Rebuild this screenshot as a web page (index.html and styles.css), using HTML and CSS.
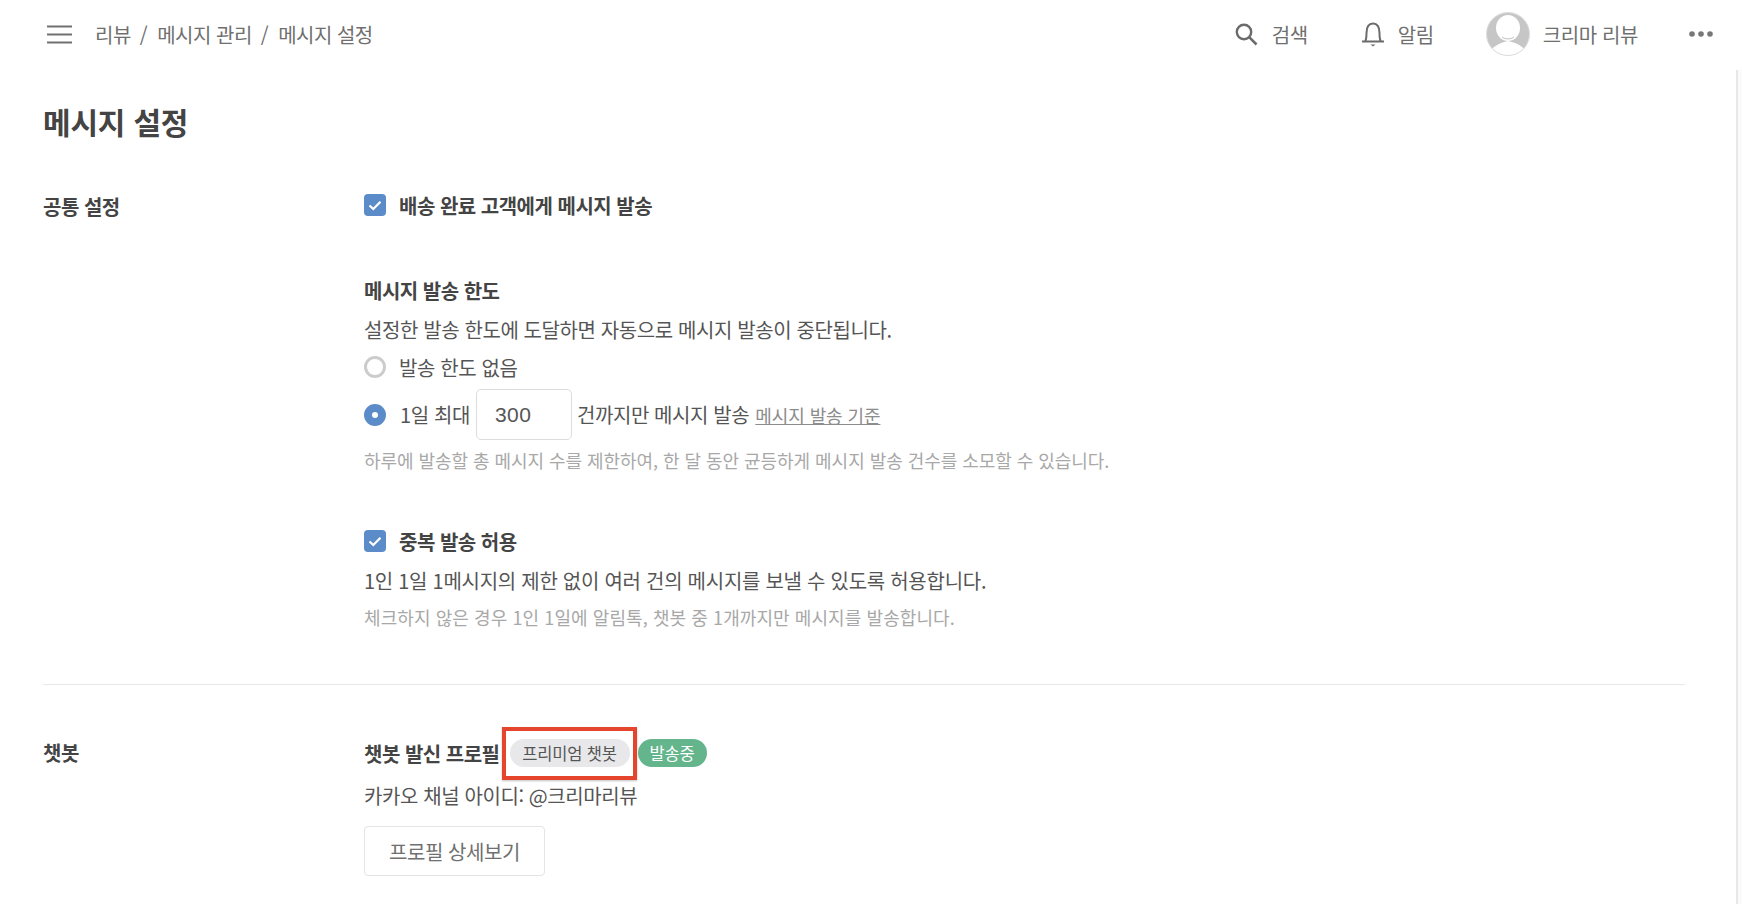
FILE: index.html
```html
<!DOCTYPE html>
<html lang="ko">
<head>
<meta charset="utf-8">
<title>메시지 설정</title>
<link rel="stylesheet" href="styles.css">
</head>
<body>
<header class="topbar">
  <svg class="menu-icon" width="26" height="19" viewBox="0 0 26 19"><path d="M0 1.500h25M0 9.500h25M0 17.500h25" stroke="#707070" stroke-width="2.200" fill="none"/></svg>
  <nav class="crumbs"><span>리뷰</span><span class="sep">/</span><span>메시지 관리</span><span class="sep">/</span><span>메시지 설정</span></nav>
  <div class="top-actions">
    <div class="action action-search">
      <svg width="24" height="24" viewBox="0 0 24 24"><circle cx="10" cy="10" r="7.200" stroke="#6b6b6b" stroke-width="2.400" fill="none"/><path d="M15.200 15.200L22.500 22.500" stroke="#6b6b6b" stroke-width="2.600" fill="none"/></svg>
      <span>검색</span>
    </div>
    <div class="action action-bell">
      <svg width="24" height="26" viewBox="0 0 24 26"><path d="M1 20.500h22M4 20.500c1.500-2 1.500-4 1.500-8.500C5.500 6 8 2.500 12 2.500s6.500 3.500 6.500 9.500c0 4.500 0 6.500 1.500 8.500" stroke="#6b6b6b" stroke-width="2" fill="none"/><path d="M9.500 23.500h5L12 25.500z" fill="#6b6b6b"/></svg>
      <span>알림</span>
    </div>
    <div class="action action-user">
      <svg class="avatar" width="44" height="44" viewBox="0 0 44 44"><defs><clipPath id="avatar-clip"><circle cx="22" cy="22" r="21.500"/></clipPath></defs><g clip-path="url(#avatar-clip)"><rect width="44" height="44" fill="#c6c6c6"/><ellipse cx="22" cy="16" rx="12" ry="13" fill="#fff"/><path d="M3 44c1-9 10-13 19-15c9 2 18 6 19 15z" fill="#fff"/><path d="M16 25c3 2.500 9 2.500 12 0" stroke="#bdbdbd" stroke-width="1" fill="none"/></g><circle cx="22" cy="22" r="21.500" fill="none" stroke="#dcdcdc"/></svg>
      <span>크리마 리뷰</span>
    </div>
    <svg class="more" width="24" height="8" viewBox="0 0 24 8"><circle cx="3" cy="4" r="2.800" fill="#777"/><circle cx="12" cy="4" r="2.800" fill="#777"/><circle cx="21" cy="4" r="2.800" fill="#777"/></svg>
  </div>
</header>

<main class="page">
  <h1 class="title">메시지 설정</h1>

  <section class="row row-common">
    <h2 class="row-label">공통 설정</h2>
    <div class="row-body">
      <label class="check-line">
        <span class="checkbox"><svg width="14" height="11" viewBox="0 0 14 11"><path d="M1.500 5.500L5.300 9L12.500 1.800" stroke="#fff" stroke-width="2.200" fill="none"/></svg></span>
        <span class="strong">배송 완료 고객에게 메시지 발송</span>
      </label>

      <div class="group group-limit">
        <div class="strong group-title">메시지 발송 한도</div>
        <p class="desc">설정한 발송 한도에 도달하면 자동으로 메시지 발송이 중단됩니다.</p>
        <div class="radio-line radio-none"><span class="radio"></span><span class="radio-text">발송 한도 없음</span></div>
        <div class="radio-line radio-max">
          <span class="radio radio-on"></span>
          <span class="radio-text">1일 최대</span>
          <span class="num-input">300</span>
          <span class="after-input">건까지만 메시지 발송</span>
          <a class="link">메시지 발송 기준</a>
        </div>
        <p class="hint hint-limit">하루에 발송할 총 메시지 수를 제한하여, 한 달 동안 균등하게 메시지 발송 건수를 소모할 수 있습니다.</p>
      </div>

      <div class="group group-dup">
        <label class="check-line">
          <span class="checkbox"><svg width="14" height="11" viewBox="0 0 14 11"><path d="M1.500 5.500L5.300 9L12.500 1.800" stroke="#fff" stroke-width="2.200" fill="none"/></svg></span>
          <span class="strong">중복 발송 허용</span>
        </label>
        <p class="desc desc-dup">1인 1일 1메시지의 제한 없이 여러 건의 메시지를 보낼 수 있도록 허용합니다.</p>
        <p class="hint hint-dup">체크하지 않은 경우 1인 1일에 알림톡, 챗봇 중 1개까지만 메시지를 발송합니다.</p>
      </div>
    </div>
  </section>

  <hr class="divider">

  <section class="row row-bot">
    <h2 class="row-label row-label-bot">챗봇</h2>
    <div class="row-body">
      <div class="profile-head">
        <span class="strong">챗봇 발신 프로필</span>
        <span class="highlight"><span class="badge badge-gray">프리미엄 챗봇</span></span>
        <span class="badge badge-green">발송중</span>
      </div>
      <p class="desc channel">카카오 채널 아이디: @크리마리뷰</p>
      <button class="btn" type="button">프로필 상세보기</button>
    </div>
  </section>
</main>
<div class="scroll-edge"></div>
</body>
</html>
```

FILE: styles.css
```css
* { box-sizing: border-box; }
html, body { margin: 0; height: 904px; overflow: hidden; background: #fff; }
body { font-family: "Noto Sans CJK KR", "Noto Sans", sans-serif; color: #555; font-size: 20px; position: relative; }
p, h1, h2 { margin: 0; }

.topbar { height: 68px; display: flex; align-items: center; padding-left: 47px; color: #6f6f6f; }
.menu-icon { margin-right: 22px; flex: none; }
.crumbs { display: flex; font-size: 20px; letter-spacing: -0.5px; }
.sep { margin: 0 10px 0 9px; }
.top-actions { margin-left: auto; display: flex; align-items: center; height: 68px; }
.action { display: flex; align-items: center; gap: 13px; font-size: 20px; letter-spacing: -0.4px; }
.action-search { gap: 14px; }
.action-bell { margin-left: 53px; }
.action-user { margin-left: 52px; }
.more { margin-left: 51px; margin-right: 29px; }

.page { padding: 0 57px 0 43px; }
.title { font-size: 30px; font-weight: 700; line-height: 44px; color: #444; margin-top: 31px; letter-spacing: -0.2px; }

.row { display: flex; }
.row-common { margin-top: 47px; }
.row-label { width: 321px; flex: none; font-size: 20px; font-weight: 700; color: #444; line-height: 30px; letter-spacing: -0.5px; margin-top: 2px; }
.row-label-bot { margin-top: 0; }
.row-body { flex: 1; }
.strong { font-weight: 700; font-size: 20px; color: #444; letter-spacing: -0.5px; }

.check-line { display: flex; align-items: center; gap: 13px; height: 30px; }
.checkbox { width: 22px; height: 22px; border-radius: 4px; background: #5b8cc9; display: flex; align-items: center; justify-content: center; flex: none; }

.group-limit { margin-top: 56px; }
.group-title { line-height: 30px; }
.desc { font-size: 20px; line-height: 30px; color: #555; letter-spacing: -0.4px; margin-top: 9px; }
.radio-line { display: flex; align-items: center; letter-spacing: -0.4px; }
.radio-none { height: 30px; margin-top: 7px; gap: 13px; }
.radio-max { height: 51px; margin-top: 7px; }
.radio { width: 22px; height: 22px; border-radius: 50%; border: 3px solid #ccc; background: #fff; flex: none; }
.radio-on { border: 8px solid #5b8cc9; margin-right: 14px; }
.num-input { width: 96px; height: 51px; border: 1px solid #ddd; border-radius: 5px; margin-left: 6px; padding-left: 18px; display: flex; align-items: center; font-family: "Liberation Sans", sans-serif; font-size: 21px; letter-spacing: 0.5px; color: #555; }
.after-input { margin-left: 5px; }
.link { margin-left: 6px; font-size: 18px; color: #8c8c8c; text-decoration: underline; letter-spacing: -0.1px; }
.hint { font-size: 18px; line-height: 26px; color: #a8a8a8; letter-spacing: -0.05px; }
.hint-limit { margin-top: 7px; }

.group-dup { margin-top: 53px; }
.desc-dup { margin-top: 10px; letter-spacing: -0.27px; }
.hint-dup { margin-top: 8px; letter-spacing: 0.08px; }

.divider { border: 0; border-top: 1px solid #e8e8e8; margin: 54px 0 0; }
.row-bot { margin-top: 53px; }
.profile-head { display: flex; align-items: center; height: 30px; }
.highlight { display: flex; align-items: center; border: 4px solid #e5452c; width: 135px; height: 53px; margin: -11px 0 -11px 2px; padding-left: 4px; box-shadow: 0 1px 2px rgba(0, 0, 0, 0.25); flex: none; }
.badge { display: inline-flex; align-items: center; justify-content: center; height: 28px; border-radius: 14px; font-size: 16.500px; letter-spacing: -0.2px; flex: none; }
.badge-gray { width: 120px; background: #e8e8ea; color: #555; }
.badge-green { width: 69px; background: #64b58c; color: #fff; margin-left: 1px; }
.channel { margin-top: 13px; }
.btn { display: block; margin-top: 15px; width: 181px; height: 50px; border: 1px solid #e4e4e4; border-radius: 4px; background: #fff; font: inherit; color: #707070; letter-spacing: -0.4px; }

.scroll-edge { position: absolute; right: 0; top: 70px; bottom: 0; width: 6px; background: #fafafa; border-left: 2px solid #e8e8e8; }
```
